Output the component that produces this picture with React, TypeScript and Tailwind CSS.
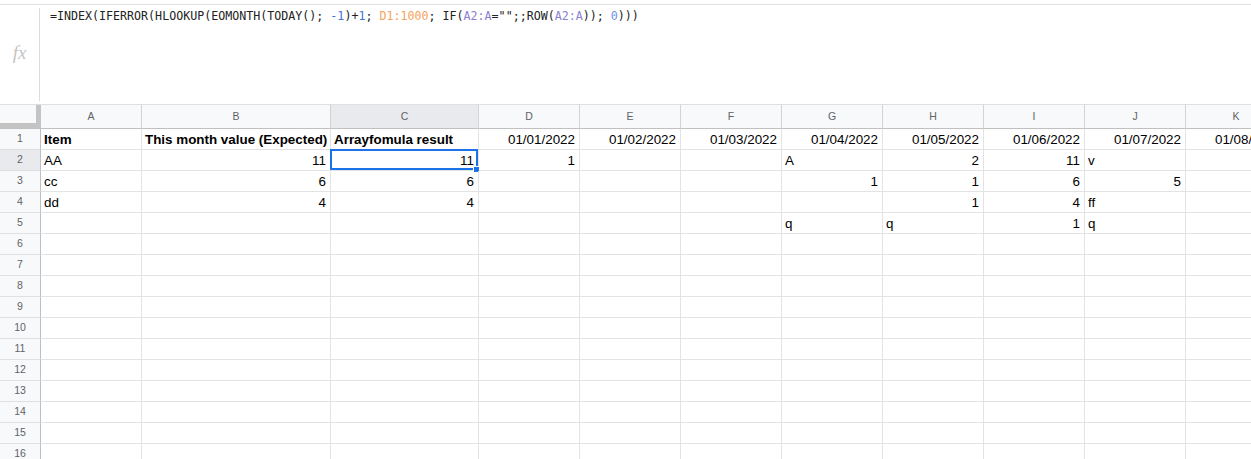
import React from 'react';

type Cell = { v: string; bold?: boolean; right?: boolean };

const COLS = ['A', 'B', 'C', 'D', 'E', 'F', 'G', 'H', 'I', 'J', 'K'];

const t = (v: string): Cell => ({ v });
const n = (v: string): Cell => ({ v, right: true });
const b = (v: string): Cell => ({ v, bold: true });

const DATA: Record<number, Record<string, Cell>> = {
  1: {
    A: b('Item'),
    B: b('This month value (Expected)'),
    C: b('Arrayfomula result'),
    D: n('01/01/2022'),
    E: n('01/02/2022'),
    F: n('01/03/2022'),
    G: n('01/04/2022'),
    H: n('01/05/2022'),
    I: n('01/06/2022'),
    J: n('01/07/2022'),
    K: n('01/08/2022'),
  },
  2: { A: t('AA'), B: n('11'), C: n('11'), D: n('1'), G: t('A'), H: n('2'), I: n('11'), J: t('v') },
  3: { A: t('cc'), B: n('6'), C: n('6'), G: n('1'), H: n('1'), I: n('6'), J: n('5') },
  4: { A: t('dd'), B: n('4'), C: n('4'), H: n('1'), I: n('4'), J: t('ff') },
  5: { G: t('q'), H: t('q'), I: n('1'), J: t('q') },
};

const ROWS = Array.from({ length: 16 }, (_, i) => i + 1);

function Formula() {
  return (
    <span className="whitespace-pre text-[#222]">
      =INDEX(IFERROR(HLOOKUP(EOMONTH(TODAY(); <span className="text-[#3d74d9]">-1</span>)+
      <span className="text-[#3d74d9]">1</span>; <span className="text-[#f3a35c]">D1:1000</span>; IF(
      <span className="text-[#8b7fd0]">A2:A</span>=&quot;&quot;;;ROW(
      <span className="text-[#8b7fd0]">A2:A</span>)); <span className="text-[#6e8fe6]">0</span>)))
    </span>
  );
}

export default function App() {
  return (
    <div className="w-[1251px] h-[459px] overflow-hidden bg-white pt-[4px] font-['Liberation_Sans',Arial,sans-serif]">
      {/* formula bar */}
      <div className="flex h-[100px] border-t border-[#e0e0e0]">
        <div className="flex w-[39px] items-center justify-center pb-[2px] font-['Liberation_Serif',serif] text-[19px] italic text-[#c4c4c4]">
          fx
        </div>
        <div className="my-[3px] w-px bg-[#dadce0]" />
        <div className="pl-[10px] pt-[3px] font-['DejaVu_Sans_Mono',monospace] text-[11.65px] leading-[16px]">
          <Formula />
        </div>
      </div>

      {/* grid */}
      <div className="grid grid-cols-[41px_101px_189px_148px_101px_101px_101px_101px_101px_101px_101px_101px] text-[13.4px] text-black">
        {/* column header row */}
        <div className="relative h-[25px] border-y border-[#e0e0e0] border-b-[#c0c0c0] bg-[#f8f9fa]">
          <div className="absolute right-0 top-0 h-[23px] w-[5px] bg-[#c4c4c4]" />
          <div className="absolute bottom-0 left-0 h-[5px] w-[41px] bg-[#c4c4c4]" />
        </div>
        {COLS.map((c) => (
          <div
            key={c}
            className={`flex h-[25px] items-center justify-center border-y border-r border-[#e0e0e0] border-b-[#c0c0c0] border-r-[#d3d3d3] text-[10.5px] text-[#5f6368] ${
              c === 'C' ? 'bg-[#e8eaed]' : 'bg-[#f8f9fa]'
            }`}
          >
            {c}
          </div>
        ))}

        {ROWS.map((r) => (
          <React.Fragment key={r}>
            <div
              className={`flex h-[21px] items-center justify-center border-b border-r border-[#e0e0e0] border-r-[#c0c0c0] text-[10.5px] text-[#5f6368] ${
                r === 2 ? 'bg-[#e8eaed]' : 'bg-[#f8f9fa]'
              }`}
            >
              {r}
            </div>
            {COLS.map((c) => {
              const cell = DATA[r]?.[c];
              const selected = r === 2 && c === 'C';
              return (
                <div
                  key={c}
                  className={`relative flex h-[21px] items-end whitespace-nowrap border-b border-r border-[#e2e3e3] px-[3px] pb-[2px] leading-[15px] ${
                    cell?.right ? 'justify-end pr-[4px]' : 'justify-start'
                  } ${cell?.bold ? 'font-bold' : ''}`}
                >
                  {cell?.v}
                  {selected && (
                    <>
                      <div className="absolute -left-px -top-px bottom-0 right-0 border-2 border-[#1a73e8]" />
                      <div className="absolute -bottom-[3px] -right-[2px] h-[7px] w-[7px] border border-white bg-[#1a73e8]" />
                    </>
                  )}
                </div>
              );
            })}
          </React.Fragment>
        ))}
      </div>
    </div>
  );
}
